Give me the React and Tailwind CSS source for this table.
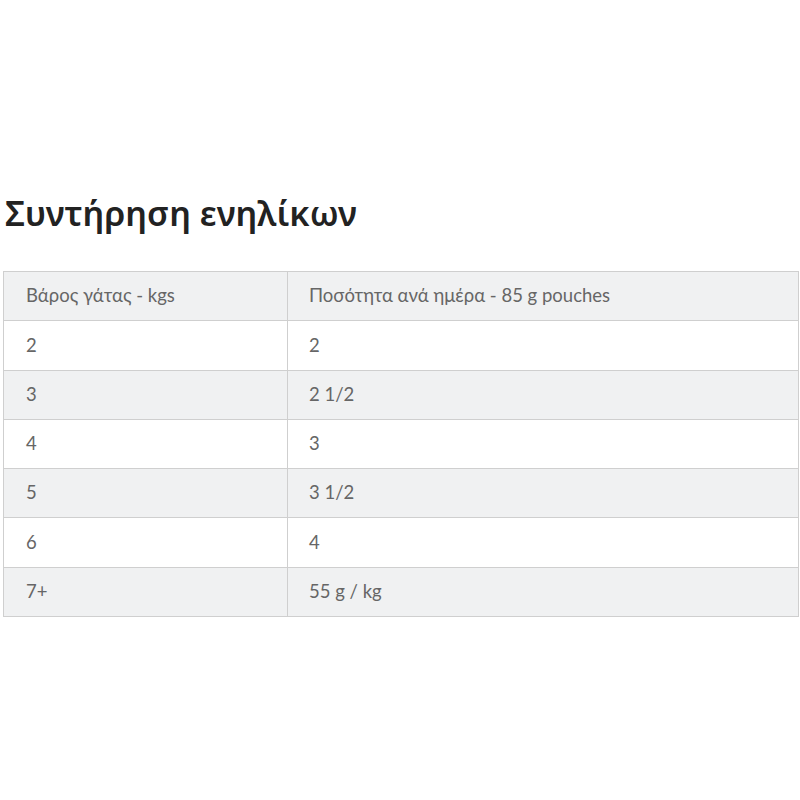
import React from 'react';

const rows = [
  ['2', '2'],
  ['3', '2 1/2'],
  ['4', '3'],
  ['5', '3 1/2'],
  ['6', '4'],
  ['7+', '55 g / kg'],
];

export default function App() {
  return (
    <div className="w-[800px] h-[800px] bg-white pt-[189px] pl-[3px] pr-[1px]" style={{ fontFamily: 'Lato, "Noto Sans", sans-serif' }}>
      <h2 className="text-[34.5px] leading-[48px] font-semibold text-[#222] pl-[2px] mb-[34px]" style={{ fontFamily: '"Noto Sans", "Open Sans", sans-serif' }}>
        Συντήρηση ενηλίκων
      </h2>
      <table className="w-full border-collapse text-[18.5px] text-[#666]">
        <thead>
          <tr className="bg-[#f0f1f2]">
            <th className="w-[284px] h-[49.3px] border border-[#cfcfcf] text-left font-normal pl-[22px]">Βάρος γάτας - kgs</th>
            <th className="h-[49.3px] border border-[#cfcfcf] text-left font-normal pl-[21px]">Ποσότητα ανά ημέρα - 85 g pouches</th>
          </tr>
        </thead>
        <tbody>
          {rows.map(([a, b], i) => (
            <tr key={a} className={i % 2 === 1 ? 'bg-[#f0f1f2]' : 'bg-white'}>
              <td className="h-[49.3px] border border-[#cfcfcf] pl-[22px]">{a}</td>
              <td className="h-[49.3px] border border-[#cfcfcf] pl-[21px]">{b}</td>
            </tr>
          ))}
        </tbody>
      </table>
    </div>
  );
}
